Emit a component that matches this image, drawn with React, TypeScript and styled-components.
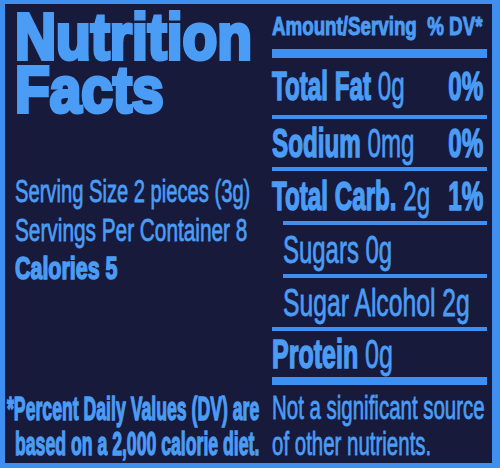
import React from 'react';
import styled, {createGlobalStyle} from 'styled-components';

const BLUE = '#3f8ff0';
const INK = '#4b9cf5';
const NAVY = '#171a3a';

const GlobalStyle = createGlobalStyle`
    body {
        margin: 0;
        background: ${NAVY};
    }
`;

const Label = styled.div`
    width: 500px;
    height: 468px;
    box-sizing: border-box;
    border: solid ${BLUE};
    border-width: 4px 8px 5px 5px;
    background: ${NAVY};
    color: ${INK};
    font-family: "Liberation Sans", Arial, sans-serif;
    -webkit-text-stroke: 0.8px ${INK};
    display: grid;
    grid-template-columns: 258px 1fr;
    overflow: hidden;
`;

const LeftColumn = styled.div`
    display: flex;
    flex-direction: column;
    padding: 6px 0 2px 10px;
    min-width: 0;
`;

const RightColumn = styled.div`
    display: flex;
    flex-direction: column;
    padding: 0 5px 0 9px;
    min-width: 0;
`;

// the label is set in a condensed face; squeeze the installed sans to match
const Squeeze = styled.span<{ $sx?: number; $origin?: string }>`
    display: inline-block;
    white-space: nowrap;
    transform: scaleX(${p => p.$sx ?? 0.6});
    transform-origin: ${p => p.$origin ?? 'left'} center;
`;

const Title = styled.h1`
    margin: 0;
    font-size: 65px;
    line-height: 53px;
    font-weight: 700;
    -webkit-text-stroke: 4px ${INK};

    ${Squeeze} {
        display: block;
    }
`;

const Serving = styled.div`
    margin-top: 56px;
    font-size: 32px;
    line-height: 38.5px;

    ${Squeeze} {
        display: block;
    }
`;

const Footnote = styled.div`
    margin-top: auto;
    font-size: 33px;
    line-height: 35px;
    font-weight: 700;
    -webkit-text-stroke: 1.4px ${INK};
`;

const FootLine = styled(Squeeze)<{ $hang?: number }>`
    display: block;
    margin-left: ${p => p.$hang ?? 0}px;
`;

const Strong = styled.b`
    font-weight: 700;
    -webkit-text-stroke: 1.6px ${INK};
`;

const Header = styled.div`
    height: 45px;
    display: flex;
    align-items: center;
    font-size: 25px;
    line-height: 25px;
    font-weight: 700;
    -webkit-text-stroke: 1px ${INK};
`;

const Row = styled.div<{ $h: number; $rule: number; $indent?: boolean; $size?: number }>`
    box-sizing: content-box;
    height: ${p => p.$h}px;
    border-top: ${p => p.$rule}px solid ${BLUE};
    margin-left: ${p => (p.$indent ? 11 : 0)}px;
    display: grid;
    grid-template-columns: minmax(0, 1fr) auto;
    align-items: center;
    font-size: ${p => p.$size ?? 41}px;
    line-height: ${p => p.$size ?? 41}px;
`;

const Pct = styled(Squeeze)`
    font-weight: 700;
    margin-right: 4px;
    -webkit-text-stroke: 1.6px ${INK};
`;

const Note = styled.div`
    box-sizing: content-box;
    flex: 1;
    border-top: 8px solid ${BLUE};
    padding-top: 5px;
    font-size: 33px;
    line-height: 36px;

    ${Squeeze} {
        display: block;
    }
`;

const nutrients = [
    {name: 'Total Fat', amount: '0g', pct: '0%', h: 57, rule: 9},
    {name: 'Sodium', amount: '0mg', pct: '0%', h: 48, rule: 4},
    {name: 'Total Carb.', amount: '2g', pct: '1%', h: 50, rule: 4},
];

const App: React.FC = () => (
    <>
        <GlobalStyle/>
        <Label>
            <LeftColumn>
                <Title>
                    <Squeeze $sx={0.875}>Nutrition</Squeeze>
                    <Squeeze $sx={0.875}>Facts</Squeeze>
                </Title>
                <Serving>
                    <Squeeze $sx={0.63}>Serving Size 2 pieces (3g)</Squeeze>
                    <Squeeze $sx={0.65}>Servings Per Container 8</Squeeze>
                    <Squeeze $sx={0.67}><Strong>Calories 5</Strong></Squeeze>
                </Serving>
                <Footnote>
                    <FootLine $sx={0.535} $hang={-8}>*Percent Daily Values (DV) are</FootLine>
                    <FootLine $sx={0.535}>based on a 2,000 calorie diet.</FootLine>
                </Footnote>
            </LeftColumn>
            <RightColumn>
                <Header>
                    <Squeeze $sx={0.75}>Amount/Serving&nbsp;&nbsp;% DV*</Squeeze>
                </Header>
                {nutrients.map(n => (
                    <Row key={n.name} $h={n.h} $rule={n.rule}>
                        <Squeeze $sx={0.59}><Strong>{n.name}</Strong> {n.amount}</Squeeze>
                        <Pct $sx={0.59} $origin="right">{n.pct}</Pct>
                    </Row>
                ))}
                <Row $h={49} $rule={4} $indent $size={38}>
                    <Squeeze $sx={0.63}>Sugars 0g</Squeeze>
                </Row>
                <Row $h={49} $rule={4} $indent $size={38}>
                    <Squeeze $sx={0.65}>Sugar Alcohol 2g</Squeeze>
                </Row>
                <Row $h={46} $rule={4}>
                    <Squeeze $sx={0.61}><Strong>Protein</Strong> 0g</Squeeze>
                </Row>
                <Note>
                    <Squeeze $sx={0.62}>Not a significant source</Squeeze>
                    <Squeeze $sx={0.62}>of other nutrients.</Squeeze>
                </Note>
            </RightColumn>
        </Label>
    </>
);

export default App;
